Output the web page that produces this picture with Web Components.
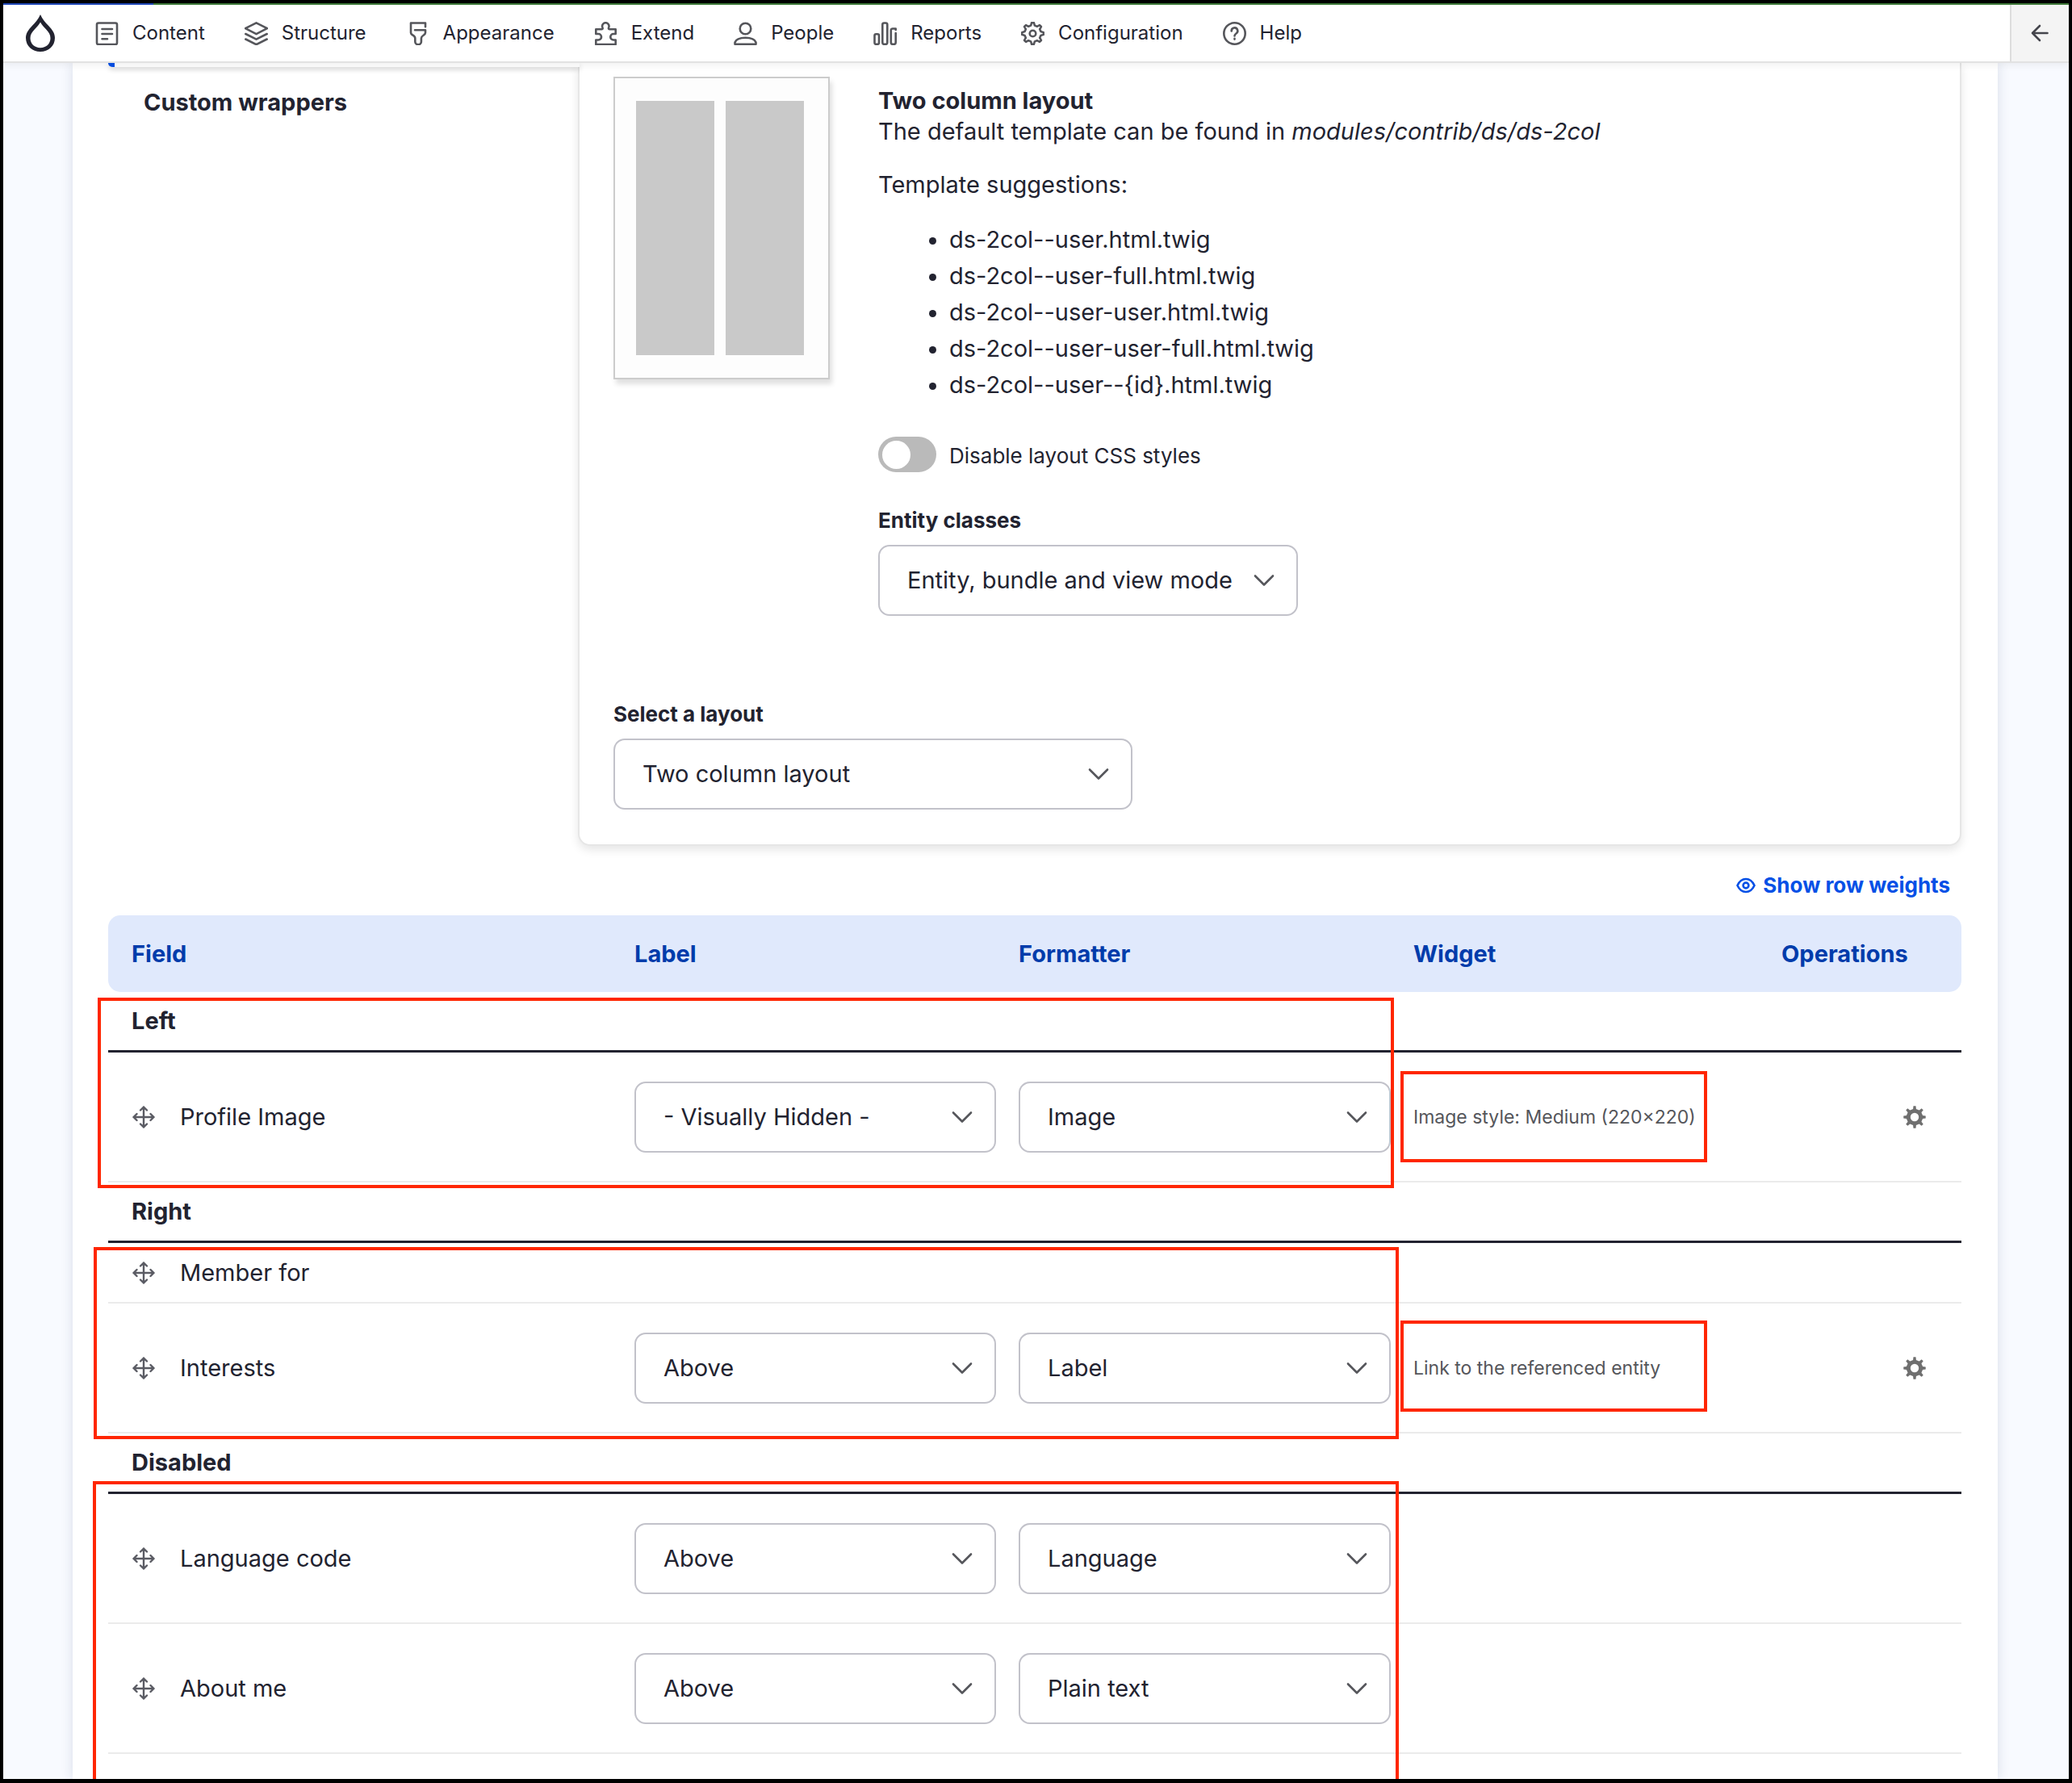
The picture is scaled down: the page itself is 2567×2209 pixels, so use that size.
<!DOCTYPE html>
<html lang="en">
<head>
<meta charset="utf-8">
<meta name="viewport" content="width=device-width, initial-scale=1">
<title>Manage display</title>
<style>
  body { margin: 0; background: #000; }
</style>
</head>
<body>
<app-frame>
  <admin-toolbar slot="toolbar">
    <toolbar-item icon="content">Content</toolbar-item>
    <toolbar-item icon="structure">Structure</toolbar-item>
    <toolbar-item icon="appearance">Appearance</toolbar-item>
    <toolbar-item icon="extend">Extend</toolbar-item>
    <toolbar-item icon="people">People</toolbar-item>
    <toolbar-item icon="reports">Reports</toolbar-item>
    <toolbar-item icon="config">Configuration</toolbar-item>
    <toolbar-item icon="help">Help</toolbar-item>
  </admin-toolbar>
  <vertical-tabs>
    <span slot="tab">Custom wrappers</span>
    <layout-details>
      <claro-select class="classes" slot="classes" label="Entity classes" value="Entity, bundle and view mode"></claro-select>
      <claro-select class="layout" slot="layout" label="Select a layout" value="Two column layout"></claro-select>
    </layout-details>
  </vertical-tabs>
  <weights-toggle>Show row weights</weights-toggle>
  <field-table></field-table>
</app-frame>

<script>
/* Gear outline with rounded lobes: radius swings between two values around the centre */
function gear(cx, cy, outer, inner, teeth, top, root) {
  const step = Math.PI * 2 / teeth, pts = [];
  for (let i = 0; i < teeth; i++) {
    const a = i * step - Math.PI / 2;
    for (const [d, r] of [[-root, inner], [-top, outer], [top, outer], [root, inner]]) {
      pts.push((cx + r * Math.cos(a + d * step)).toFixed(2) + ' ' + (cy + r * Math.sin(a + d * step)).toFixed(2));
    }
  }
  return 'M' + pts.join('L') + 'Z';
}

const ICONS = {
  logo: '<svg width="36" height="46" viewBox="0 0 36 46"><path fill="#222330" fill-rule="evenodd" d="M18 0C20.500 6 24 9.500 28 13.800C33 19 36 23.500 36 29C36 39 28 46 18 46S0 39 0 29C0 23.500 3 19 8 13.800C12 9.500 15.500 6 18 0ZM18 9.500C16 13 13.500 15.500 11 18.200C7.500 22 5.500 25 5.500 29.200C5.500 36.300 11 41.200 18 41.200S30.500 36.300 30.500 29.200C30.500 25 28.500 22 25 18.200C22.500 15.500 20 13 18 9.500Z"/></svg>',
  content: '<rect x="2" y="1.500" width="25" height="26.500" rx="2"/><path d="M8.500 9H21M8.500 15H21M8.500 21.300H15"/>',
  structure: '<path d="M14.500 1.300L28 8.200L14.500 15.200L1 8.200ZM1.300 15L14.500 21.700L27.700 15M1.300 21.500L14.500 28.200L27.700 21.500"/>',
  appearance: '<path d="M24 6.200V1.500H6V13.500C6 17 11.300 16.500 11.300 20.500V24.500A3.800 3.800 0 0 0 18.900 24.500V20.500C18.900 16.500 24 17 24 13.500V10.300H11"/>',
  extend: '<path d="M2.300 28V22.500H5.300A3.700 3.700 0 0 0 5.300 15H2.300V9.300H9.500C11 9.300 10.800 7.800 10.300 6.700A4.200 4.200 0 1 1 18.300 6.700C17.800 7.800 17.600 9.300 19.100 9.300H26.700V15H24A3.700 3.700 0 0 0 24 22.500H26.700V28Z"/>',
  people: '<circle cx="14.500" cy="8.500" r="6.800"/><path d="M1.500 27.700V25.500C3 21.500 8 19.800 14.500 19.800S26 21.500 27.500 25.500V27.700Z"/>',
  reports: '<rect x="1.500" y="15.300" width="5.500" height="12.500" rx="1.800"/><rect x="11.300" y="1.500" width="6" height="26.300" rx="2"/><path d="M27.700 10V8.500H24A2 2 0 0 0 21.800 10.500V25.800A2 2 0 0 0 23.800 27.800H25.700A2 2 0 0 0 27.700 25.800V14"/>',
  config: '<path d="' + gear(14.5, 14.5, 13.4, 10.2, 8, 0.13, 0.3) + '"/><circle cx="14.500" cy="14.500" r="3.800"/>',
  help: '<circle cx="14.500" cy="14.500" r="13.200"/><path d="M10.700 11.500A3.800 3.800 0 1 1 16.500 14.500C15 15.500 14.500 16 14.500 17.500M14.500 20.800V21.600"/>'
};
const stroked = n => `<svg width="29" height="29" viewBox="0 0 29 29" fill="none" stroke="#55565b" stroke-width="2.600" stroke-linejoin="round" stroke-linecap="round" aria-hidden="true">${ICONS[n]}</svg>`;
const MOVE = '<svg width="28" height="28" viewBox="0 0 28 28" fill="none" stroke="#5a5b63" stroke-width="2.400" stroke-linecap="round" stroke-linejoin="round"><path d="M14 1.500V26.500M1.500 14H26.500M10 5.500L14 1.500L18 5.500M10 22.500L14 26.500L18 22.500M5.500 10L1.500 14L5.500 18M22.500 10L26.500 14L22.500 18"/></svg>';
const GEAR = '<svg width="28" height="28" viewBox="0 0 28 28"><path fill="#6f6f6f" fill-rule="evenodd" d="' + gear(14, 14, 13.8, 10.2, 8, 0.14, 0.24) + 'M14 8.800A5.200 5.200 0 1 0 14 19.200A5.200 5.200 0 1 0 14 8.800Z"/></svg>';

function define(name, css, html) {
  customElements.define(name, class extends HTMLElement {
    constructor() { super(); this.attachShadow({ mode: 'open' }); }
    connectedCallback() {
      this.shadowRoot.innerHTML = `<style>*{box-sizing:border-box}:host{box-sizing:border-box}${css}</style>` +
        (typeof html === 'function' ? html(this) : html);
    }
  });
}

define('app-frame', `
  :host { display: flex; flex-direction: column; height: 100vh; overflow: hidden; border: 4px solid #000; border-bottom-width: 5px;
    background: #f8faff; color: #222330; font: 29px/38px Inter, "Liberation Sans", sans-serif; }
  main { flex: 1; min-height: 0; margin: 0 88px 0 86px; padding: 0 45px 0 44px; background: #fff; box-shadow: 0 0 14px rgba(30, 50, 90, .14); }
`, '<slot name="toolbar"></slot><main><slot></slot></main>');

define('admin-toolbar', `
  :host { display: flex; flex: none; height: 74px; padding-top: 2px; position: relative; z-index: 5; background: #fff;
    border-bottom: 2px solid #e2e2e2; box-shadow: 0 2px 10px rgba(0, 0, 0, .07); font-size: 24px; }
  :host::before { content: ""; position: absolute; inset: 0 0 auto 0; height: 2px; background: linear-gradient(90deg, #2148b8 186px, #3f7a3a 186px); }
  .logo { display: flex; align-items: center; padding: 0 50px 0 28px; }
  nav { display: flex; flex: 1; gap: 49px; align-items: center; }
  button { width: 73px; border: 0; border-left: 2px solid #ddd; background: #f4f4f4; padding: 0 2px 0 0; display: flex; align-items: center; justify-content: center; }
`, `<a class="logo" href="#" aria-label="Home">${ICONS.logo}</a><nav><slot></slot></nav>
  <button aria-label="Collapse"><svg width="22" height="22" viewBox="0 0 22 22" fill="none" stroke="#44454c" stroke-width="2.600" stroke-linecap="round" stroke-linejoin="round"><path d="M20.500 11H2M11 2L2 11L11 20"/></svg></button>`);

define('toolbar-item', `
  :host { display: block; }
  a { display: flex; align-items: center; gap: 17px; color: #222330; text-decoration: none; }
  svg { display: block; }
`, el => `<a href="#">${stroked(el.getAttribute('icon'))}<slot></slot></a>`);

define('vertical-tabs', `
  :host { display: flex; }
  .menu { flex: none; width: 582px; }
  .stub { height: 5px; width: 584px; position: relative; z-index: 1; background: #fff; border-left: 8px solid #0550e6; border-bottom-left-radius: 6px; box-shadow: 0 3px 6px rgba(0, 0, 0, .18); }
  a { display: flex; align-items: center; height: 88px; padding-left: 44px; color: #222330; font-weight: 700; text-decoration: none; }
  .pane { flex: 1; min-width: 0; background: #fff; border: 2px solid #e6e6e6; border-top: 0; border-radius: 0 0 15px 15px; box-shadow: 0 5px 12px rgba(0, 0, 0, .1); }
`, `<div class="menu"><div class="stub"></div><a href="#"><slot name="tab"></slot></a></div><section class="pane"><slot></slot></section>`);

define('layout-details', `
  :host { display: block; padding: 17px 42px 43px; }
  .top { display: flex; gap: 60px; align-items: flex-start; }
  .info { padding-top: 11px; }
  p { margin: 0; }
  .hint { margin-top: 28px; }
  ul { margin: 30px 0 45px; padding-left: 88px; }
  li + li { margin-top: 7px; }
  .bottom { margin-top: 105px; }
`, `<div class="top"><layout-thumb></layout-thumb><div class="info">
  <p><strong>Two column layout</strong></p>
  <p>The default template can be found in <em>modules/contrib/ds/ds-2col</em></p>
  <p class="hint">Template suggestions:</p>
  <ul><li>ds-2col--user.html.twig</li><li>ds-2col--user-full.html.twig</li><li>ds-2col--user-user.html.twig</li><li>ds-2col--user-user-full.html.twig</li><li>ds-2col--user--{id}.html.twig</li></ul>
  <toggle-switch label="Disable layout CSS styles"></toggle-switch>
  <slot name="classes"></slot></div></div><div class="bottom"><slot name="layout"></slot></div>`);

define('layout-thumb', `
  :host { display: flex; gap: 14px; flex: none; width: 268px; height: 375px; padding: 28px 30px 28px 26px; background: #fdfdfd; border: 2px solid #ccc; box-shadow: 3px 6px 6px rgba(0, 0, 0, .12); }
  i { flex: 1; background: #c9c9c9; }
`, '<i></i><i></i>');

define('toggle-switch', `
  :host { display: block; margin-bottom: 43px; font-size: 26px; }
  label { display: flex; align-items: center; gap: 16px; height: 44px; }
  span { padding-top: 3px; }
  input { appearance: none; display: flex; align-items: center; margin: 0; width: 72px; height: 44px; padding: 0 5px; border-radius: 22px; background: #bababa; }
  input::before { content: ""; width: 35px; height: 35px; border-radius: 50%; background: #fff; }
`, el => `<label><input type="checkbox" role="switch"><span>${el.getAttribute('label')}</span></label>`);

define('claro-select', `
  :host { display: block; }
  :host(.classes) { width: 520px; }
  :host(.layout) { width: 643px; }
  label { display: block; margin-bottom: 13px; font-size: 26px; line-height: 34px; font-weight: 700; }
  .box { display: grid; align-items: center; }
  select, svg { grid-area: 1 / 1; }
  select { appearance: none; width: 100%; height: 88px; margin: 0; padding: 0 60px 0 34px; border: 2px solid #c2c2ca; border-radius: 14px; background: #fff; color: #222330; font: inherit; }
  svg { justify-self: end; margin-right: 29px; pointer-events: none; }
`, el => {
  const l = el.getAttribute('label'), v = el.getAttribute('value'), hide = el.hasAttribute('nolabel');
  return `${hide ? '' : `<label for="s">${l}</label>`}<div class="box"><select id="s" ${hide ? `aria-label="${l}"` : ''}><option>${v}</option></select>
  <svg width="26" height="16" viewBox="0 0 26 16" fill="none" stroke="#55565b" stroke-width="2.600" stroke-linecap="round" stroke-linejoin="round"><path d="M2 2.500L13 13.500L24 2.500"/></svg></div>`;
});

define('weights-toggle', `
  :host { display: flex; justify-content: flex-end; padding: 32px 14px 20px 0; }
  button { display: flex; align-items: center; gap: 9px; padding: 0; border: 0; background: none; color: #0550e6; font: 700 26px/34px Inter, sans-serif; }
`, `<button><svg width="24" height="20" viewBox="0 0 24 20" fill="none" stroke="#0550e6" stroke-width="2.600"><path d="M1.500 10C4 4.500 8 2 12 2S20 4.500 22.500 10C20 15.500 16 18 12 18S4 15.500 1.500 10Z"/><circle cx="12" cy="10" r="3.400"/></svg><slot></slot></button>`);

const ROWS = [
  ['Left'],
  ['Profile Image', '- Visually Hidden -', 'Image', 'Image style: Medium (220×220)'],
  ['Right'],
  ['Member for', '', '', ''],
  ['Interests', 'Above', 'Label', 'Link to the referenced entity'],
  ['Disabled'],
  ['Language code', 'Above', 'Language', ''],
  ['About me', 'Above', 'Plain text', '']
];
const sel = (l, v) => v ? `<claro-select nolabel label="${l}" value="${v}"></claro-select>` : '';

define('field-table', `
  :host { display: block; position: relative; }
  table { width: 100%; table-layout: fixed; border-collapse: separate; border-spacing: 0; }
  .c-label { width: 476px; } .c-format { width: 489px; } .c-widget { width: 456px; } .c-ops { width: 223px; }
  th { height: 95px; padding: 0; text-align: left; background: #e0e9fc; color: #003cab; }
  th:first-child { padding-left: 29px; border-radius: 15px 0 0 15px; }
  th:last-child { border-radius: 0 15px 15px 0; }
  td { height: 161px; padding: 0 28px 0 0; border-bottom: 2px solid #ebebeb; }
  td:first-child { padding-left: 30px; }
  .plain td { height: 75px; }
  .region td { height: 75px; padding-left: 29px; font-weight: 700; border-bottom: 3px solid #222330; }
  .name { display: flex; align-items: center; gap: 31px; }
  .name a { display: flex; }
  .summary { padding: 0; font-size: 23px; color: #55565b; }
  td.ops { padding-right: 44px; }
  .ops button { display: flex; margin-left: auto; padding: 0; border: 0; background: none; }
`, () => `<table><colgroup><col><col class="c-label"><col class="c-format"><col class="c-widget"><col class="c-ops"></colgroup>
  <thead><tr><th>Field</th><th>Label</th><th>Formatter</th><th>Widget</th><th>Operations</th></tr></thead><tbody>` +
  ROWS.map(r => r.length === 1 ? `<tr class="region"><td colspan="5">${r[0]}</td></tr>` :
  `<tr class="${r[1] ? '' : 'plain'}"><td><div class="name"><a href="#" aria-label="Drag to re-order">${MOVE}</a>${r[0]}</div></td><td>${sel('Label for ' + r[0], r[1])}</td><td>${sel('Formatter for ' + r[0], r[2])}</td><td class="summary">${r[3]}</td><td class="ops">${r[3] ? `<button aria-label="Edit">${GEAR}</button>` : ''}</td></tr>`).join('') +
  `</tbody></table><mark-box class="left"></mark-box><mark-box class="right"></mark-box><mark-box class="disabled"></mark-box><mark-box class="image-style"></mark-box><mark-box class="link"></mark-box>`);

/* Red call-outs that float over the table */
define('mark-box', `
  :host { position: absolute; border: 4px solid #ff2600; pointer-events: none; }
  :host(.left) { left: -13px; right: 703px; top: 102px; height: 236px; }
  :host(.right) { left: -18px; right: 697px; top: 411px; height: 238px; }
  :host(.disabled) { left: -19px; right: 697px; top: 701px; height: 420px; }
  :host(.image-style) { width: 380px; right: 315px; top: 193px; height: 113px; }
  :host(.link) { width: 380px; right: 315px; top: 502px; height: 113px; }
`, '');
</script>
</body>
</html>
